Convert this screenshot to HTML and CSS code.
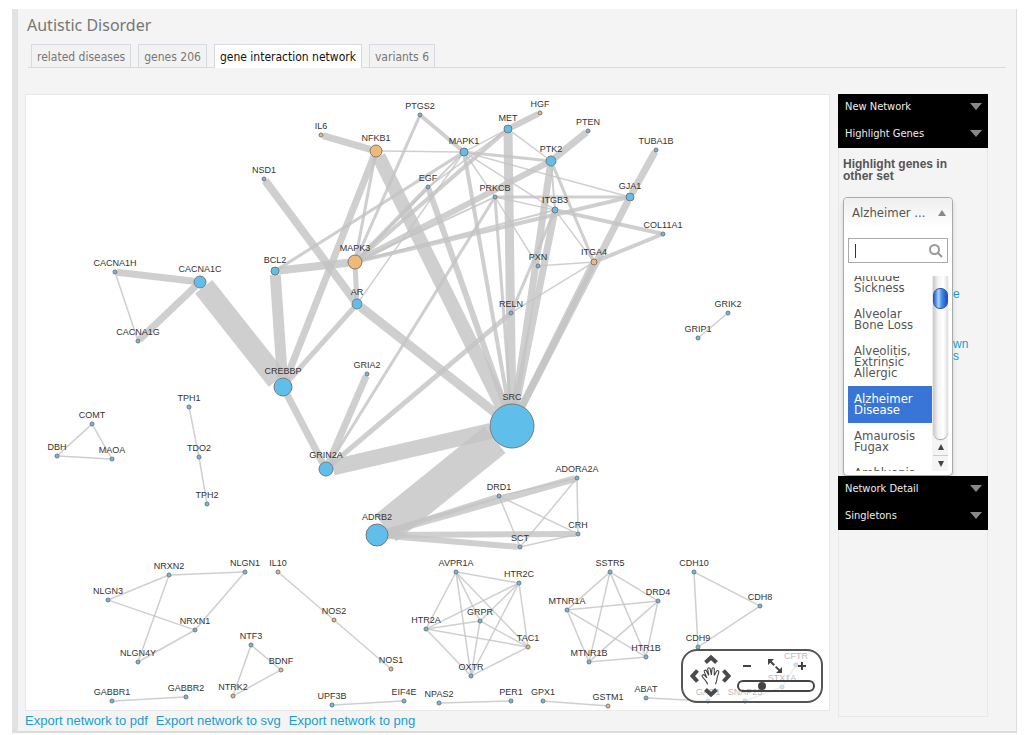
FILE: index.html
```
<!DOCTYPE html>
<html lang="en">
<head>
    <meta charset="UTF-8">
    <title>Autistic Disorder - gene interaction network</title>
    <link rel="stylesheet" href="styles.css">
</head>
<body>
    <div class="page">
        <h1 class="title">Autistic Disorder</h1>

        <nav class="tabs">
            <a class="tab" href="#diseases">related diseases</a>
            <a class="tab" href="#genes">genes 206</a>
            <a class="tab active" href="#network">gene interaction network</a>
            <a class="tab" href="#variants">variants 6</a>
        </nav>

        <div class="columns">
            <main class="main">
                <div class="stage">
                    <svg class="network" id="network" viewBox="26 95 803 615" role="img" aria-label="Gene interaction network"></svg>

                    <div class="controls">
                        <div class="pan">
                            <button class="ctl up" aria-label="Pan up"><svg width="14" height="9" viewBox="0 0 14 9"><path class="chevron" d="M1.500 7.500 7 2.500 12.500 7.500"/></svg></button>
                            <button class="ctl left" aria-label="Pan left"><svg width="9" height="14" viewBox="0 0 9 14"><path class="chevron" d="M7.500 1.500 2.500 7 7.500 12.500"/></svg></button>
                            <button class="ctl hand" aria-label="Drag">
                                <svg width="20" height="20" viewBox="0 0 18 18"><path class="thin" d="M6 16.500C5.500 13.500 2.500 12 1 9.200 .600 7.800 2.300 7.300 3.300 8.500L5.300 10.800 3 5.300C2.500 3.700 4.300 3.100 5 4.600L7 8.500 6 3C6 1.300 7.800 1 8.300 2.700L9.300 8 9.900 2.600C10.200 1.100 12 1.300 12 2.900L11.900 8.500 14 4.700C14.900 3.500 16.400 4.200 16 5.700L14.700 10C14.200 12 14.300 14 13 16.500"/></svg>
                            </button>
                            <button class="ctl right" aria-label="Pan right"><svg width="9" height="14" viewBox="0 0 9 14"><path class="chevron" d="M1.500 1.500 6.500 7 1.500 12.500"/></svg></button>
                            <button class="ctl down" aria-label="Pan down"><svg width="14" height="9" viewBox="0 0 14 9"><path class="chevron" d="M1.500 1.500 7 6.500 12.500 1.500"/></svg></button>
                        </div>
                        <div class="zoom">
                            <div class="zoom-buttons">
                                <button class="ctl" aria-label="Zoom out"><svg width="10" height="10" viewBox="0 0 10 10"><path class="sign" d="M1 5H9"/></svg></button>
                                <button class="ctl" aria-label="Fit to screen">
                                    <svg width="16" height="16" viewBox="0 0 16 16"><path class="dash" d="M3 3 13 13"/><path class="head" d="M1 1H7L1 7ZM15 15V9L9 15Z"/></svg>
                                </button>
                                <button class="ctl" aria-label="Zoom in"><svg width="10" height="10" viewBox="0 0 10 10"><path class="sign" d="M1 5H9M5 1V9"/></svg></button>
                            </div>
                            <input class="zoom-slider" type="range" min="0" max="100" value="29" aria-label="Zoom">
                        </div>
                    </div>
                </div>

                <div class="exports">
                    <a href="#pdf">Export network to pdf</a>
                    <a href="#svg">Export network to svg</a>
                    <a href="#png">Export network to png</a>
                </div>
            </main>

            <aside class="sidebar">
                <button class="section">New Network</button>
                <button class="section">Highlight Genes</button>

                <div class="section-body">
                    <h2 class="section-title">Highlight genes in other set</h2>

                    <div class="chooser">
                        <button class="chooser-value" aria-expanded="true">Alzheimer ...</button>
                        <div class="search">
                            <input class="search-input" type="text" aria-label="Search diseases">
                            <svg class="search-icon" width="14" height="14" viewBox="0 0 14 14"><circle cx="5.500" cy="5.500" r="4.500"/><path d="M8.500 8.500 13 13"/></svg>
                        </div>
                        <div class="results">
                            <ul class="options" id="options" role="listbox" aria-label="Diseases">
                                <li role="option">Altitude Sickness</li>
                                <li role="option">Alveolar Bone Loss</li>
                                <li role="option">Alveolitis, Extrinsic Allergic</li>
                                <li role="option" class="selected" aria-selected="true">Alzheimer Disease</li>
                                <li role="option">Amaurosis Fugax</li>
                                <li role="option">Amblyopia</li>
                            </ul>
                            <div class="scrollbar">
                                <div class="track"><div class="thumb"></div></div>
                                <div class="arrow arrow-up"></div>
                                <div class="arrow arrow-down"></div>
                            </div>
                        </div>
                    </div>

                    <div class="side-links">
                        <a href="#some">e</a>
                        <a href="#own">wn<br>s</a>
                    </div>
                </div>

                <button class="section">Network Detail</button>
                <button class="section">Singletons</button>
            </aside>
        </div>
    </div>

    <script src="network.js"></script>
</body>
</html>
```
FILE: styles.css
```
* {
    box-sizing: border-box;
}

body {
    margin: 0;
    background: #fff;
    font-family: "DejaVu Sans Condensed", "Noto Sans", sans-serif;
    font-size: 12px;
    color: #666;
}

button {
    font: inherit;
    border: 0;
    padding: 0;
    background: none;
    cursor: pointer;
}

a {
    color: #1b9dd0;
    text-decoration: none;
}

.page {
    margin: 9px 7px 0 12px;
    padding: 4px 0 0 7px;
    background: #f4f4f4;
    border-left: 6px solid #e1e2e4;
    border-right: 1px solid #dcdde0;
    border-bottom: 2px solid #dcdcdc;
}

.title {
    margin: 0;
    padding-left: 2px;
    font-family: "Noto Sans", sans-serif;
    font-size: 16px;
    line-height: 24px;
    font-weight: normal;
    color: #777;
}

/* tabs */
.tabs {
    display: flex;
    gap: 7px;
    margin: 7px 10px 0 3px;
    padding-left: 3px;
    border-bottom: 1px solid #d6dae2;
}

.tab {
    height: 23px;
    padding: 0 5px;
    line-height: 25px;
    color: #777;
    background: #f2f2f2;
    border: 1px solid #d6dae2;
    border-bottom: 0;
}

.tab.active {
    margin-bottom: -1px;
    height: 24px;
    color: #111;
    background: #fff;
}

.columns {
    display: flex;
    gap: 8px;
    margin-top: 26px;
    padding-right: 28px;
}

.main {
    flex: 1;
    min-width: 0;
}

.stage {
    position: relative;
    background: #fff;
    border: 1px solid #e8e8e8;
}

/* network drawing */
.network {
    display: block;
    width: 100%;
    height: auto;
    font-family: "Liberation Sans", Arial, sans-serif;
    font-size: 9px;
}

.edge {
    stroke: #c3c3c3;
    stroke-opacity: 0.8;
}

.node {
    fill: #5fbfea;
    stroke: #777;
    stroke-width: 1;
}

.node.seed {
    fill: #f0b976;
}

.label {
    fill: #333;
    text-anchor: middle;
}

/* pan and zoom box lies over the network */
.controls {
    position: absolute;
    right: 6px;
    bottom: 7px;
    display: flex;
    gap: 5px;
    padding: 3px 6px;
    border: 2px solid #555;
    border-radius: 16px;
    background: rgba(255, 255, 255, 0.65);
}

.ctl {
    display: flex;
    align-items: center;
    justify-content: center;
}

.pan {
    display: grid;
    grid-template: "a up b" 11px "left hand right" 22px "c down d" 11px / 11px 21px 11px;
}

.up { grid-area: up; }
.left { grid-area: left; }
.hand { grid-area: hand; }
.right { grid-area: right; }
.down { grid-area: down; }

.chevron {
    fill: none;
    stroke: #4a4a4a;
    stroke-width: 4;
}

.thin {
    fill: #fff;
    stroke: #444;
    stroke-width: 1;
}

.sign,
.dash {
    stroke: #444;
    stroke-width: 2;
}

.dash {
    stroke-dasharray: 6 2;
}

.head {
    fill: #444;
}

.zoom {
    width: 78px;
    padding-top: 4px;
}

.zoom-buttons {
    display: flex;
    justify-content: space-between;
    padding: 0 8px 0 5px;
}

.zoom-slider {
    appearance: none;
    display: block;
    width: 100%;
    height: 12px;
    margin: 6px 0 0;
    border: 2px solid #444;
    border-radius: 6px;
    background: none;
}

.zoom-slider::-webkit-slider-thumb {
    appearance: none;
    width: 8px;
    height: 8px;
    border-radius: 50%;
    background: #444;
}

.exports {
    display: flex;
    gap: 8px;
    padding: 1px 0 1px;
    font: 13px/18px "Liberation Sans", Arial, sans-serif;
}

/* sidebar */
.sidebar {
    width: 150px;
    margin: 0 0 14px;
    border: 1px solid #e8e8e8;
    border-width: 0 1px 1px;
}

.section {
    display: flex;
    align-items: center;
    justify-content: space-between;
    width: 150px;
    height: 27px;
    margin-left: -1px;
    padding: 0 6px 2px 7px;
    font-size: 11px;
    color: #eee;
    background: #000;
}

.section::after {
    content: "";
    border: 6px solid transparent;
    border-top: 7px solid #888;
    border-bottom: 0;
}

.section-body {
    position: relative;
    height: 328px;
    padding: 10px 4px 0;
    font-family: "Liberation Sans", Arial, sans-serif;
}

.section-title {
    width: 120px;
    margin: 0;
    font-size: 12px;
    line-height: 12px;
    font-weight: bold;
    color: #555;
}

/* open drop-down, over the section content */
.chooser {
    position: absolute;
    top: 49px;
    left: 4px;
    width: 110px;
    padding: 0 4px 4px;
    font-family: "DejaVu Sans Condensed", "Noto Sans", sans-serif;
    font-size: 13px;
    color: #555;
    background: #fff;
    border: 1px solid #aaa;
    border-radius: 4px;
    box-shadow: 0 4px 5px rgba(0, 0, 0, 0.15);
}

.chooser-value {
    display: flex;
    align-items: center;
    justify-content: space-between;
    width: 108px;
    height: 29px;
    margin: 0 -4px;
    padding: 0 6px 0 8px;
    color: #555;
    border-radius: 4px 4px 0 0;
    background: linear-gradient(#eee, #fff);
}

.chooser-value::after {
    content: "";
    border: 4px solid transparent;
    border-top: 0;
    border-bottom: 6px solid #888;
}

.search {
    display: flex;
    align-items: center;
    height: 25px;
    margin-top: 11px;
    padding-right: 4px;
    border: 1px solid #aaa;
}

.search-input {
    flex: 1;
    min-width: 0;
    height: 23px;
    padding: 0 6px;
    border: 0;
    outline: 0;
    font: inherit;
    background: linear-gradient(#333, #333) 6px center / 1px 14px no-repeat;
}

.search-icon {
    fill: none;
    stroke: #999;
    stroke-width: 2;
}

.results {
    display: flex;
    height: 195px;
    margin-top: 13px;
}

.options {
    flex: 1;
    margin: 0;
    padding: 0;
    overflow: hidden;
    list-style: none;
}

.options li {
    padding: 7px 10px 8px 6px;
    line-height: 11px;
}

.options .selected {
    color: #fff;
    background: #3875d7;
}

.scrollbar {
    display: flex;
    flex-direction: column;
    width: 16px;
    padding-left: 1px;
    background: #f4f4f4;
}

.track {
    flex: 1;
    padding-top: 12px;
    border-radius: 0 0 8px 8px;
    background: linear-gradient(90deg, #c8c8c8, #f4f4f4 35%, #fff 70%, #ddd);
    box-shadow: 0 1px 1px #999;
}

.thumb {
    height: 21px;
    border: 1px solid #2757a8;
    border-radius: 7px;
    background: linear-gradient(90deg, #2463d0, #a9d0ff 35%, #3f8bea 60%, #1c50b8);
}

.arrow {
    display: flex;
    align-items: center;
    justify-content: center;
    height: 16px;
    border-top: 1px solid #ccc;
}

.arrow-up {
    border-top: 0;
}

.arrow::after {
    content: "";
    border: 3px solid transparent;
}

.arrow-up::after {
    border-top: 0;
    border-bottom: 6px solid #444;
}

.arrow-down::after {
    border-bottom: 0;
    border-top: 6px solid #444;
}

.side-links {
    padding: 106px 0 0 110px;
    font-size: 12px;
    line-height: 12px;
}

.side-links a {
    display: block;
    margin-bottom: 38px;
}
```
FILE: network.js
```
// name: [x, y, radius, seed gene]
const nodes = {
    IL6: [321, 135, 2, 1], NFKB1: [376, 151, 6, 1], PTGS2: [420, 115, 2], MET: [508, 129, 4],
    HGF: [540, 113, 2, 1], PTEN: [588, 131, 2], TUBA1B: [656, 150, 2], MAPK1: [464, 152, 4],
    PTK2: [551, 161, 5], NSD1: [264, 179, 2], EGF: [428, 187, 2], PRKCB: [495, 197, 2],
    GJA1: [630, 197, 4], ITGB3: [555, 210, 3], COL11A1: [663, 234, 2], ITGA4: [594, 262, 3, 1],
    PXN: [538, 266, 2], MAPK3: [355, 262, 7, 1], BCL2: [275, 271, 4], AR: [357, 304, 5],
    RELN: [511, 313, 2], CACNA1H: [115, 272, 2], CACNA1C: [200, 282, 6], CACNA1G: [138, 341, 2],
    CREBBP: [283, 387, 9], GRIA2: [367, 374, 2], GRIN2A: [326, 469, 7], SRC: [512, 426, 22],
    ADRB2: [377, 535, 11], DRD1: [499, 496, 2], ADORA2A: [577, 478, 2], CRH: [578, 534, 2],
    SCT: [520, 547, 2], GRIK2: [728, 313, 2], GRIP1: [698, 338, 2],
    COMT: [92, 424, 2], DBH: [57, 456, 2], MAOA: [112, 459, 2],
    TPH1: [189, 407, 2], TDO2: [199, 457, 2], TPH2: [207, 504, 2],
    NRXN2: [169, 575, 2], NLGN1: [245, 572, 2], NLGN3: [108, 600, 2], NRXN1: [195, 630, 2], NLGN4Y: [138, 662, 2],
    IL10: [278, 572, 2, 1], NOS2: [334, 620, 2, 1], NOS1: [391, 669, 2, 1],
    NTF3: [251, 645, 2], BDNF: [281, 670, 2, 1], NTRK2: [233, 696, 2, 1],
    GABBR1: [112, 701, 2], GABBR2: [186, 697, 2], UPF3B: [332, 705, 2], EIF4E: [404, 701, 2],
    AVPR1A: [456, 572, 2], HTR2C: [519, 583, 2], HTR2A: [426, 629, 2], GRPR: [480, 621, 2],
    TAC1: [528, 647, 2, 1], OXTR: [471, 676, 2],
    SSTR5: [610, 572, 2], DRD4: [658, 601, 2], MTNR1A: [567, 610, 2], MTNR1B: [589, 662, 2], HTR1B: [646, 657, 2],
    CDH10: [694, 572, 2], CDH8: [760, 606, 2], CDH9: [698, 647, 2],
    NPAS2: [439, 703, 2], PER1: [511, 701, 2], GPX1: [543, 701, 2], GSTM1: [608, 706, 2, 1],
    ABAT: [646, 698, 2], GAD1: [708, 701, 2], SNAP25: [745, 701, 2], STX1A: [782, 687, 2], CFTR: [796, 665, 2]
};

// source, target, width
const edges = `
IL6 NFKB1 7, NFKB1 MAPK1 1, NFKB1 SRC 14, NFKB1 CREBBP 7, NFKB1 MAPK3 3, PTGS2 MAPK1 4, PTGS2 MAPK3 3,
NSD1 AR 8, EGF MAPK3 4, EGF SRC 6, EGF MET 1, BCL2 MAPK1 3, BCL2 MAPK3 8, BCL2 CREBBP 11,
MAPK3 MAPK1 2, MAPK3 MET 4, MAPK3 PTK2 6, MAPK3 PRKCB 2, MAPK3 GJA1 4, MAPK3 ITGB3 2, MAPK3 AR 5,
AR MAPK1 1, AR CREBBP 5, AR SRC 9, MAPK1 PTK2 3, MAPK1 MET 1, MAPK1 GJA1 1, MAPK1 ITGB3 1, MAPK1 SRC 4,
MAPK1 PRKCB 1, MET HGF 6, MET SRC 9, MET PTK2 1, PTK2 PTEN 7, PTK2 SRC 7, PTK2 ITGA4 3, PTK2 ITGB3 2,
PRKCB GJA1 3, PRKCB ITGB3 1, PRKCB PXN 1, PRKCB SRC 3, PRKCB GRIN2A 3, ITGB3 COL11A1 4,
ITGB3 ITGA4 1, ITGB3 RELN 3, ITGB3 SRC 7, PXN ITGA4 1, RELN ITGA4 1, RELN GRIN2A 5,
GJA1 TUBA1B 7, GJA1 SRC 7, ITGA4 COL11A1 4, ITGA4 SRC 7,
CACNA1H CACNA1C 7, CACNA1H CACNA1G 1, CACNA1G CACNA1C 7, CACNA1C CREBBP 22, CREBBP GRIN2A 7,
GRIA2 GRIN2A 7, GRIN2A SRC 16, ADRB2 SRC 34, ADRB2 DRD1 5, ADRB2 ADORA2A 7, ADRB2 CRH 6, ADRB2 SCT 6,
DRD1 SCT 1, DRD1 CRH 1, DRD1 ADORA2A 1, ADORA2A SCT 1, ADORA2A CRH 1, SCT CRH 1, GRIK2 GRIP1 1,
COMT DBH 1, COMT MAOA 1, DBH MAOA 1, TPH1 TDO2 1, TDO2 TPH2 1,
NRXN2 NLGN1 1, NRXN2 NLGN3 1, NRXN2 NLGN4Y 1, NLGN1 NRXN1 1, NLGN3 NRXN1 1, NRXN1 NLGN4Y 1,
IL10 NOS2 1, NOS2 NOS1 1, NTF3 BDNF 1, NTF3 NTRK2 1, BDNF NTRK2 1, GABBR1 GABBR2 1, UPF3B EIF4E 1,
AVPR1A HTR2C 1, AVPR1A HTR2A 1, AVPR1A GRPR 1, AVPR1A TAC1 1, AVPR1A OXTR 1, HTR2C HTR2A 1, HTR2C GRPR 1,
HTR2C TAC1 1, HTR2C OXTR 1, HTR2A GRPR 1, HTR2A TAC1 1, HTR2A OXTR 1, GRPR TAC1 1, GRPR OXTR 1, TAC1 OXTR 1,
SSTR5 DRD4 1, SSTR5 MTNR1A 1, SSTR5 MTNR1B 1, SSTR5 HTR1B 1, DRD4 MTNR1A 1, DRD4 MTNR1B 1, DRD4 HTR1B 1,
MTNR1A MTNR1B 1, MTNR1A HTR1B 1, MTNR1B HTR1B 1, CDH10 CDH8 1, CDH10 CDH9 1, CDH8 CDH9 1,
NPAS2 PER1 1, GPX1 GSTM1 1, ABAT GAD1 1, SNAP25 STX1A 1, STX1A CFTR 1`;

const svg = document.getElementById('network');

function add(tag, attrs, text) {
    const el = document.createElementNS('http://www.w3.org/2000/svg', tag);
    for (const key in attrs) {
        el.setAttribute(key, attrs[key]);
    }
    if (text) {
        el.textContent = text;
    }
    svg.appendChild(el);
}

// an edge runs between the rims of its two nodes
edges.split(',').forEach(line => {
    const [from, to, width] = line.trim().split(' ');
    const [x1, y1, r1] = nodes[from];
    const [x2, y2, r2] = nodes[to];
    const length = Math.hypot(x2 - x1, y2 - y1);
    const dx = (x2 - x1) / length;
    const dy = (y2 - y1) / length;
    add('line', {
        class: 'edge',
        x1: x1 + dx * r1, y1: y1 + dy * r1,
        x2: x2 - dx * r2, y2: y2 - dy * r2,
        'stroke-width': width === '1' ? 1.5 : width
    });
});

for (const name in nodes) {
    const [x, y, r, seed] = nodes[name];
    add('circle', { class: seed ? 'node seed' : 'node', cx: x, cy: y, r: r });
}

for (const name in nodes) {
    const [x, y, r] = nodes[name];
    add('text', { class: 'label', x: x, y: y - r - 4 }, name);
}

document.getElementById('options').scrollTop = 12;
```
